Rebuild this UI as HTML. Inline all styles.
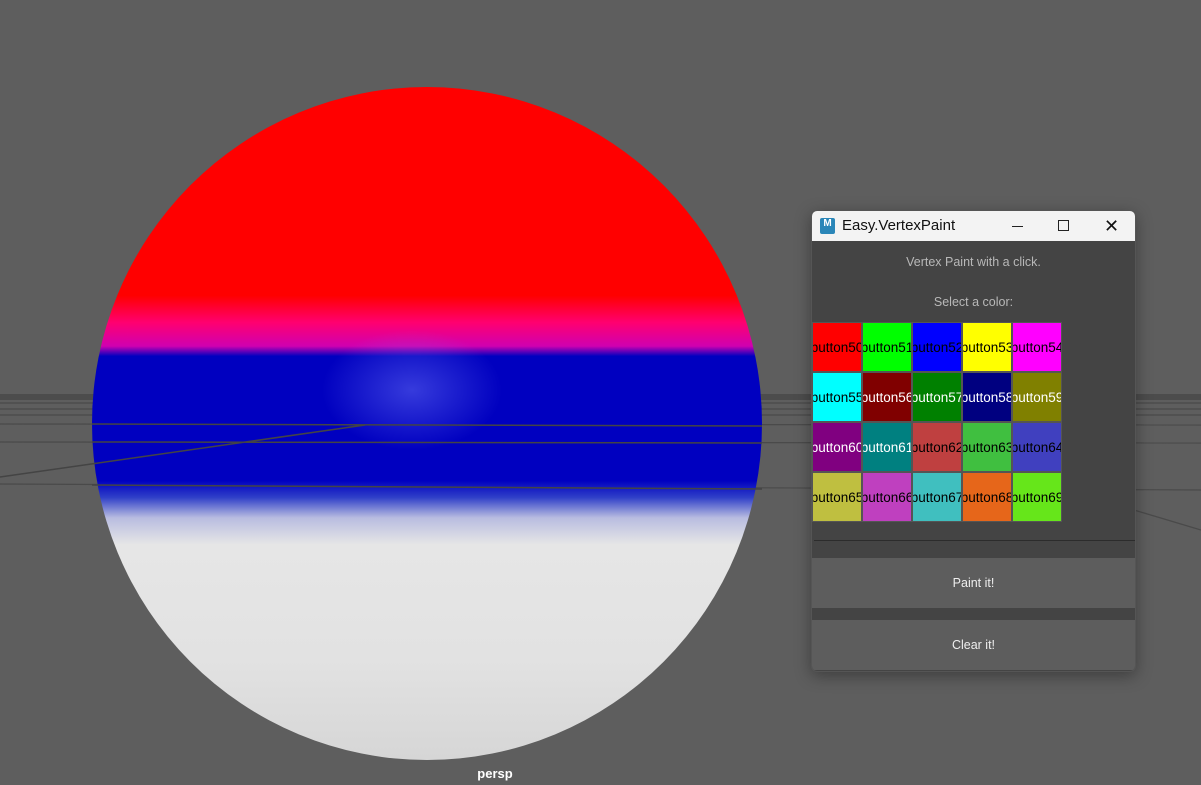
<!DOCTYPE html>
<html><head><style>
body{margin:0;width:1201px;height:785px;background:#5e5e5e;position:relative;overflow:hidden;font-family:"Liberation Sans",sans-serif}
.sphere{position:absolute;left:92px;top:87px;width:670px;height:673px;border-radius:50%;
background:
radial-gradient(ellipse 90px 60px at 320px 303px,rgba(120,130,255,.45),rgba(120,130,255,0)),
linear-gradient(to bottom,#ff0000 0%,#ff0000 31%,#ff0070 35%,#d000b0 38.5%,#0000c0 40%,#0000c0 58.5%,#3040c8 61%,#b8bce0 64%,#e6e6e6 68%,#e2e2e2 85%,#d6d6d6 100%)}
.panel{position:absolute;left:811px;top:210px;width:323px;height:460px;background:#444;border-radius:6px;overflow:hidden;box-shadow:0 4px 16px rgba(0,0,0,.35);border:1px solid #555}
.title{height:30px;background:#f3f3f3;color:#111;font-size:15px;line-height:30px;position:relative}
.title .ic{position:absolute;left:8px;top:7px;width:15px;height:16px;background:#2a86b8;border-radius:2px;color:#fff;font-size:10px;font-weight:bold;line-height:12px;text-align:center}
.title .t{position:absolute;left:30px}
.lbl{position:absolute;width:100%;text-align:center;color:#b8b8b8;font-size:12.5px}
.grid{position:absolute;left:0;top:111px;display:grid;grid-template-columns:repeat(5,50px);grid-auto-rows:50px}
.grid div{box-sizing:border-box;border:1px solid #555;overflow:hidden;white-space:nowrap;display:flex;justify-content:center;align-items:center;font-size:13.5px;color:#000}
.w{color:#fff!important}
.btn{position:absolute;left:0;width:323px;height:50px;background:#5d5d5d;color:#eee;font-size:12.5px;text-align:center;line-height:50px}
</style></head><body>
<svg width="1201" height="785" style="position:absolute;left:0;top:0">
<rect x="0" y="394" width="1201" height="6" fill="#4c4c4c"/>
<g stroke="#4a4a4a" stroke-width="1.2">
<line x1="0" y1="403" x2="1201" y2="403"/><line x1="0" y1="409" x2="1201" y2="409"/>
<line x1="0" y1="415" x2="1201" y2="415"/><line x1="0" y1="424" x2="1201" y2="425"/>
<line x1="0" y1="442" x2="1201" y2="443"/><line x1="0" y1="484" x2="1201" y2="490"/>
<line x1="1134" y1="510" x2="1201" y2="530"/>
</g>
</svg>
<div class="sphere"></div>
<svg width="1201" height="785" style="position:absolute;left:0;top:0">
<g stroke="#444" stroke-width="1.5">
<line x1="92" y1="424" x2="762" y2="426"/><line x1="92" y1="442" x2="762" y2="443"/>
<line x1="92" y1="485" x2="762" y2="489"/><line x1="0" y1="477" x2="365" y2="425"/>
</g>
</svg>
<div style="position:absolute;left:0;width:990px;top:766px;text-align:center;color:#fff;font-weight:bold;font-size:13px">persp</div>
<div class="panel">
<div class="title"><div class="ic">M</div><span class="t">Easy.VertexPaint</span>
<span style="position:absolute;left:200px;top:15px;width:11px;height:1px;background:#222"></span>
<span style="position:absolute;left:246px;top:9px;width:9px;height:9px;border:1px solid #222"></span>
<span style="position:absolute;left:292px;top:0;font-size:18px">✕</span></div>
<div class="lbl" style="top:44px">Vertex Paint with a click.</div>
<div class="lbl" style="top:84px">Select a color:</div>
<div class="grid">
<div style="background:#ff0000">button50</div><div style="background:#00ff00">button51</div><div style="background:#0000ff">button52</div><div style="background:#ffff00">button53</div><div style="background:#ff00ff">button54</div>
<div style="background:#00ffff">button55</div><div class="w" style="background:#800000">button56</div><div class="w" style="background:#008000">button57</div><div class="w" style="background:#000080">button58</div><div class="w" style="background:#808000">button59</div>
<div class="w" style="background:#800080">button60</div><div class="w" style="background:#008080">button61</div><div style="background:#bf4040">button62</div><div style="background:#40bf40">button63</div><div style="background:#4040bf">button64</div>
<div style="background:#bfbf40">button65</div><div style="background:#bf40bf">button66</div><div style="background:#40bfbf">button67</div><div style="background:#e6661a">button68</div><div style="background:#66e61a">button69</div>
</div>
<div style="position:absolute;left:2px;right:0;top:329px;height:1px;background:#2c2c2c"></div>
<div class="btn" style="top:347px">Paint it!</div>
<div class="btn" style="top:409px">Clear it!</div>
</div>
</body></html>
